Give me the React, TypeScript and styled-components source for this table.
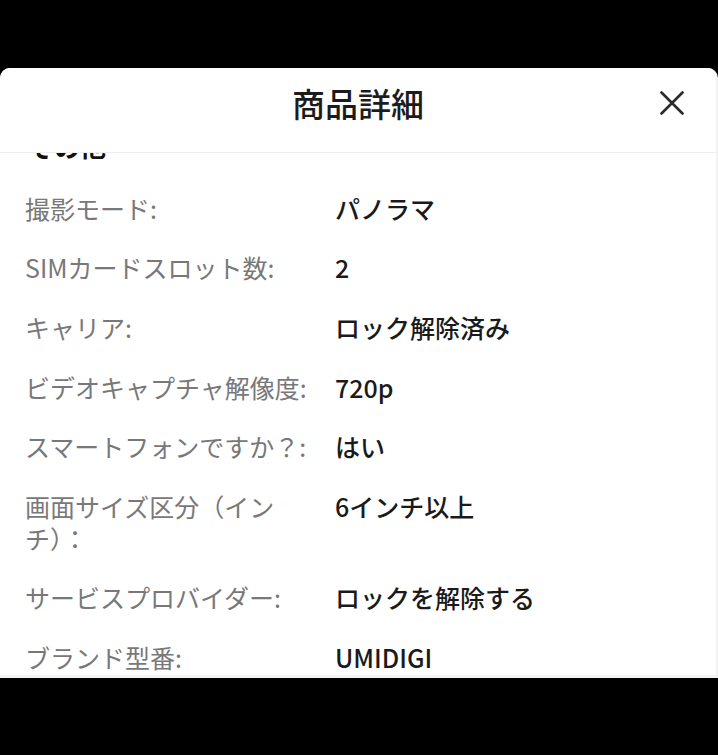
import React from "react";
import styled, { createGlobalStyle } from "styled-components";

const GlobalStyle = createGlobalStyle`
  html, body {
    margin: 0;
    padding: 0;
    background: #000;
  }
  body {
    font-family: "Noto Sans CJK JP", "Noto Sans", sans-serif;
  }
  * { box-sizing: border-box; }
`;

const Screen = styled.div`
  width: 718px;
  height: 755px;
  background: #000;
  display: flex;
  flex-direction: column;
  padding-top: 68px;
  overflow: hidden;
`;

const Sheet = styled.div`
  height: 610px;
  background: #fff;
  border-radius: 10px 10px 0 0;
  display: flex;
  flex-direction: column;
  overflow: hidden;
  border-right: 2px solid #f2f2f2;
  border-bottom: 3px solid #f4f4f4;
`;

const Header = styled.header`
  height: 85px;
  flex: none;
  display: grid;
  grid-template-columns: 1fr auto 1fr;
  align-items: center;
  padding-bottom: 14px;
  border-bottom: 1px solid #eeeeee;
  background: #fff;
  position: relative;
  z-index: 1;
`;

const Title = styled.h1`
  grid-column: 2;
  margin: 0;
  font-size: 33px;
  font-weight: 500;
  color: #1c1c1c;
  line-height: 1;
`;

const CloseButton = styled.button`
  grid-column: 3;
  justify-self: end;
  margin-right: 29px;
  width: 30px;
  height: 30px;
  border: none;
  background: transparent;
  padding: 0;
  display: flex;
  align-items: center;
  justify-content: center;
  color: #2a2a2a;
  cursor: pointer;
`;

const Body = styled.div`
  flex: 1;
  overflow: hidden;
`;

const Scroller = styled.div`
  margin-top: -23px;
  display: flex;
  flex-direction: column;
`;

const SectionTitle = styled.h2`
  margin: 0 0 16px;
  padding-left: 28px;
  font-size: 26px;
  font-weight: 700;
  line-height: 32px;
  color: #111;
`;

const Row = styled.div`
  display: grid;
  grid-template-columns: 310px 1fr;
  padding: 13.8px 0 13.8px 25px;
  font-size: 25px;
  line-height: 32px;
`;

const Label = styled.div`
  color: #787878;
  padding-right: 10px;
  line-break: strict;
`;

const Value = styled.div`
  color: #1a1a1a;
  font-weight: 500;
`;

const specs: [string, string][] = [
  ["撮影モード:", "パノラマ"],
  ["SIMカードスロット数:", "2"],
  ["キャリア:", "ロック解除済み"],
  ["ビデオキャプチャ解像度:", "720p"],
  ["スマートフォンですか？:", "はい"],
  ["画面サイズ区分（インチ）：", "6インチ以上"],
  ["サービスプロバイダー:", "ロックを解除する"],
  ["ブランド型番:", "UMIDIGI"],
];

export default function App() {
  return (
    <>
      <GlobalStyle />
      <Screen>
        <Sheet>
          <Header>
            <Title>商品詳細</Title>
            <CloseButton aria-label="閉じる">
              <svg width="24" height="24" viewBox="0 0 24 24" fill="none">
                <path
                  d="M1.5 1.5 L22.5 22.5 M22.5 1.5 L1.5 22.5"
                  stroke="currentColor"
                  strokeWidth="2.6"
                  strokeLinecap="round"
                />
              </svg>
            </CloseButton>
          </Header>
          <Body>
            <Scroller>
              <SectionTitle>その他</SectionTitle>
              {specs.map(([label, value]) => (
                <Row key={label}>
                  <Label>{label}</Label>
                  <Value>{value}</Value>
                </Row>
              ))}
            </Scroller>
          </Body>
        </Sheet>
      </Screen>
    </>
  );
}
